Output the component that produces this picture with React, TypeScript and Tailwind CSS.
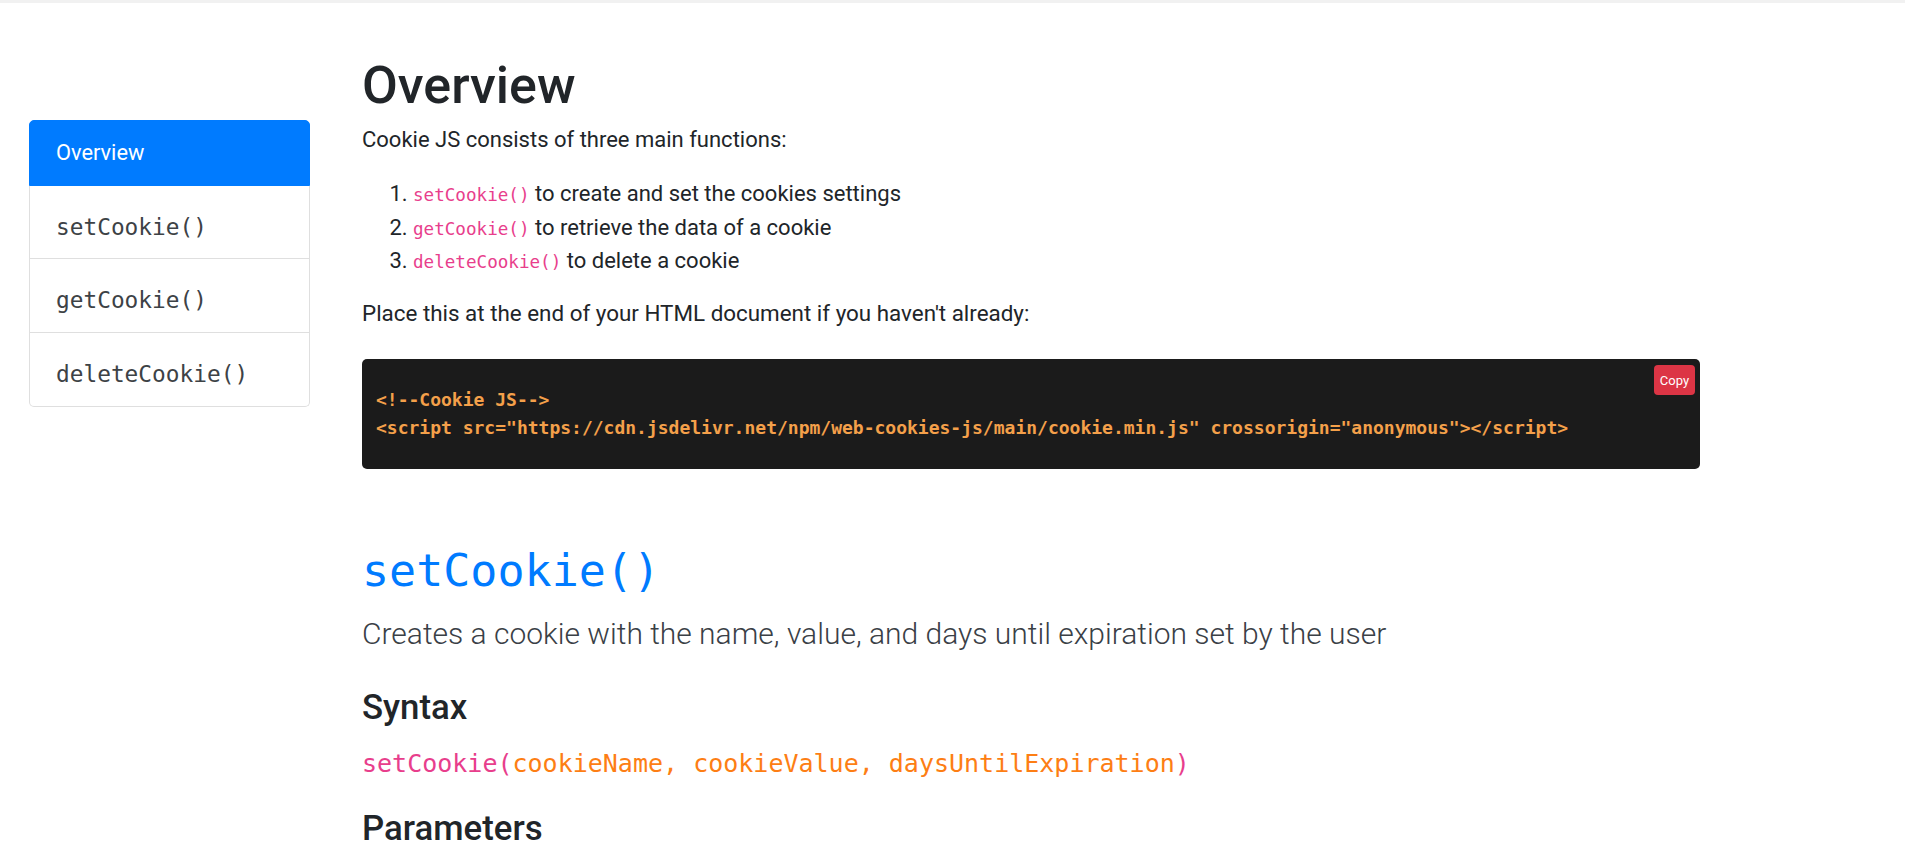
import React from "react"

const sideItems = ["setCookie()", "getCookie()", "deleteCookie()"]

const overviewList = [
  { fn: "setCookie()", text: "to create and set the cookies settings" },
  { fn: "getCookie()", text: "to retrieve the data of a cookie" },
  { fn: "deleteCookie()", text: "to delete a cookie" },
]

function Sidebar() {
  return (
    <aside className="w-[281px] shrink-0 pt-[117px]">
      <nav className="flex flex-col">
        <a className="flex h-[66px] items-center rounded-t-[5px] border border-[#007bff] bg-[#007bff] pl-[26px] text-[21.8px] leading-[32.4px] text-white">
          Overview
        </a>
        {sideItems.map((item, i) => (
          <a
            key={item}
            className={`${i === 0 ? "h-[73px]" : "h-[74px]"} ${
              i === sideItems.length - 1 ? "rounded-b-[5px]" : ""
            } border-x border-b border-[#dfdfdf] pl-[26px] pt-[25px] font-['DejaVu_Sans_Mono',monospace] text-[22.8px] leading-[33px] text-[#3d4246]`}
          >
            {item}
          </a>
        ))}
      </nav>
    </aside>
  )
}

function CodeBlock() {
  return (
    <div className="relative mt-[30px] rounded-[5px] bg-[#1b1b1b] px-[14px] py-[27px]">
      <button className="absolute right-[5px] top-[6px] flex h-[30px] w-[41px] items-center justify-center rounded-[4px] bg-[#dc3545] text-[13px] text-white">
        Copy
      </button>
      <pre className="font-['DejaVu_Sans_Mono',monospace] text-[18px] font-bold leading-[28px] text-[#f4a04a]">
        {"<!--Cookie JS-->\n"}
        {'<script src="https://cdn.jsdelivr.net/npm/web-cookies-js/main/cookie.min.js" crossorigin="anonymous"></script>'}
      </pre>
    </div>
  )
}

export default function App() {
  return (
    <div className="h-[845px] overflow-hidden bg-white font-[Roboto,sans-serif] text-[#212529]">
      <div className="h-[3px] bg-[#f1f1f1]" />
      <div className="flex pl-[29px]">
        <Sidebar />

        <main className="ml-[52px] w-[1338px] pt-[53px]">
          {/* Overview */}
          <h1 className="text-[52px] font-medium leading-[60px]">Overview</h1>
          <p className="mt-[8px] text-[22px] leading-[32.4px]">Cookie JS consists of three main functions:</p>
          <ol className="mt-[21.6px] list-decimal pl-[51px] text-[22px] leading-[32.5px]">
            {overviewList.map((item) => (
              <li key={item.fn}>
                <code className="font-['DejaVu_Sans_Mono',monospace] text-[17.6px] text-[#e83e8c]">{item.fn}</code>{" "}
                {item.text}
              </li>
            ))}
          </ol>
          <p className="mt-[18.5px] text-[22.4px] leading-[32.4px]">
            Place this at the end of your HTML document if you haven't already:
          </p>

          <CodeBlock />

          {/* setCookie */}
          <h2 className="mt-[76px] font-['DejaVu_Sans_Mono',monospace] text-[45px] leading-[52px] text-[#007bff]">
            setCookie()
          </h2>
          <p className="mt-[16.5px] text-[30px] font-light leading-[40.5px] text-[#3a4046]">
            Creates a cookie with the name, value, and days until expiration set by the user
          </p>
          <h4 className="mt-[34px] text-[34.8px] font-medium leading-[38.9px]">Syntax</h4>
          <div className="mt-[18px] font-['DejaVu_Sans_Mono',monospace] text-[25px] leading-[37px]">
            <span className="text-[#e83e8c]">setCookie(</span>
            <span className="text-[#fd7e14]">cookieName, cookieValue, daysUntilExpiration</span>
            <span className="text-[#e83e8c]">)</span>
          </div>
          <h4 className="mt-[27px] text-[34.8px] font-medium leading-[38.9px]">Parameters</h4>
        </main>
      </div>
    </div>
  )
}
